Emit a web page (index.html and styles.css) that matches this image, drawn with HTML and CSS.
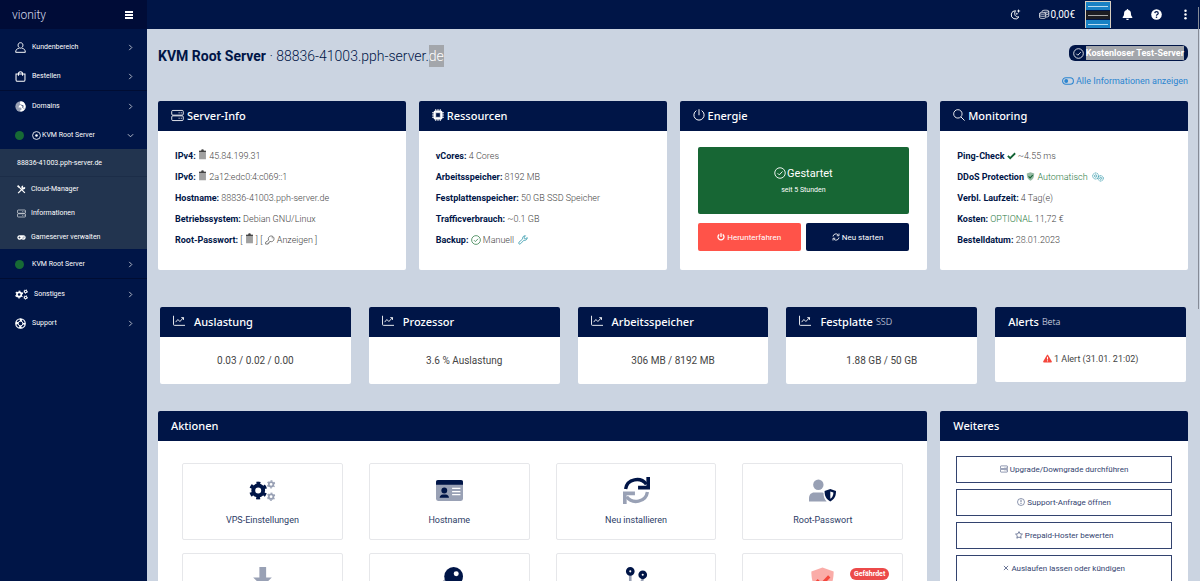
FILE: index.html
```html
<!DOCTYPE html>
<html lang="de">
<head>
  <meta charset="UTF-8" />
  <meta name="viewport" content="width=device-width, initial-scale=1" />
  <title>KVM Root Server - vionity</title>
  <link rel="stylesheet" href="styles.css">
</head>
<body>

<!-- icon sprite -->
<svg class="sprite" aria-hidden="true">
  <symbol id="user" viewBox="0 0 16 16"><g fill="none" stroke="currentColor" stroke-width="1.4"><path d="M8 1c2.300 0 3.500 1.600 3.500 3.700S10 9 8 9 4.500 6.800 4.500 4.700 5.700 1 8 1z"/><path d="M5.500 9.300C2.500 9.800 1 11.500 1 15h14c0-3.500-1.500-5.200-4.500-5.700"/></g></symbol>
  <symbol id="bag" viewBox="0 0 16 16"><path d="M1.500 4.500h13v8.500c0 1.200-.8 2-2 2h-9c-1.200 0-2-.8-2-2zM5 7V4c0-4 6-4 6 0v3" fill="none" stroke="currentColor" stroke-width="1.500"/></symbol>
  <symbol id="globe" viewBox="0 0 16 16"><circle cx="8" cy="8" r="7.500" fill="currentColor" opacity=".6"/><path d="M8 .5a7.500 7.500 0 0 1 5 13c-2 2-5 2-6 1l3-3-2-2H5l1-3 3-1-2-2z" fill="currentColor"/><path d="M9 6l3 1-1 2 2 2" stroke="#001547" fill="none"/></symbol>
  <symbol id="dotcircle" viewBox="0 0 16 16"><circle cx="8" cy="8" r="7" fill="none" stroke="currentColor" stroke-width="1.500"/><circle cx="8" cy="8" r="2.300" fill="currentColor"/></symbol>
  <symbol id="tools" viewBox="0 0 16 16"><path d="M2 2l12 12" stroke="currentColor" stroke-width="2.200"/><path d="M2 14.500L10 6.500" stroke="currentColor" stroke-width="2.200"/><path d="M14.500 3.500A3.500 3.500 0 1 1 11 1l-.5 3.500z" fill="currentColor"/><path d="M0 2l2-2 3 3-2 2z" fill="currentColor"/></symbol>
  <symbol id="server" viewBox="0 0 18 16"><g fill="none" stroke="currentColor" stroke-width="1.200"><rect x="1" y="1" width="16" height="6.500" rx="1.500"/><rect x="1" y="8.500" width="16" height="6.500" rx="1.500"/><path d="M10.500 4.300h1.500m1.500 0h1.500M10.500 11.800h1.500m1.500 0h1.500"/></g></symbol>
  <symbol id="gamepad" viewBox="0 0 18 16"><path d="M5 3.500h8a4.500 4.500 0 1 1-3 8H8a4.500 4.500 0 1 1-3-8z" fill="currentColor"/><path d="M5 6v4M3 8h4" stroke="#22344f" stroke-width="1.400"/><circle cx="12" cy="9" r="1" fill="#22344f"/><circle cx="14" cy="7" r="1" fill="#22344f"/></symbol>
  <symbol id="gear" viewBox="0 0 16 16"><circle cx="8" cy="8" r="4.300" fill="none" stroke="currentColor" stroke-width="3.400"/><circle cx="8" cy="8" r="6.600" fill="none" stroke="currentColor" stroke-width="2.400" stroke-dasharray="3.300 3.611" stroke-dashoffset="1.650" transform="rotate(30 8 8)"/></symbol>
  <symbol id="gears" viewBox="0 0 22 18"><use href="#gear" x="0" y="2" width="14" height="14"/><use href="#gear" x="14" y="0" width="8" height="8"/><use href="#gear" x="14" y="10" width="8" height="8"/></symbol>
  <symbol id="gears-duo" viewBox="0 0 22 18"><use href="#gear" x="0" y="1.500" width="15" height="15"/><g opacity=".4"><use href="#gear" x="14.500" y="0.500" width="7" height="7"/><use href="#gear" x="14.500" y="10.500" width="7" height="7"/></g></symbol>
  <symbol id="gears-thin" viewBox="0 0 18 14"><g fill="none" stroke="currentColor"><circle cx="5.500" cy="5.500" r="4.500" stroke-dasharray="2 .8" stroke-width="1.200"/><circle cx="5.500" cy="5.500" r="1.800"/><circle cx="13" cy="9" r="4" stroke-dasharray="2 .8" stroke-width="1.200"/><circle cx="13" cy="9" r="1.500"/></g></symbol>
  <symbol id="ring" viewBox="0 0 16 16"><g fill="none" stroke="currentColor"><circle cx="8" cy="8" r="7" stroke-width="1.500"/><circle cx="8" cy="8" r="3.400" stroke-width="1.300"/><circle cx="8" cy="8" r="5" stroke-width="3.600" stroke-dasharray="3.500 4.354" stroke-dashoffset="1.750"/></g></symbol>
  <symbol id="chev" viewBox="0 0 8 8"><path d="M2.500 1l3 3-3 3" fill="none" stroke="currentColor" stroke-width="1"/></symbol>
  <symbol id="chevdown" viewBox="0 0 8 8"><path d="M1 2.500l3 3 3-3" fill="none" stroke="currentColor" stroke-width="1"/></symbol>
  <symbol id="moon" viewBox="0 0 16 16"><path d="M8 2.500a6 6 0 1 0 5 9c-5 1-8-4-5-9z" fill="none" stroke="currentColor" stroke-width="1.400"/><path d="M12.500 0l.8 2.200 2.200.8-2.200.8-.8 2.200-.8-2.200L9.500 3l2.200-.8zM10 5l.6 1.400L12 7l-1.400.6L10 9l-.6-1.400L8 7l1.400-.6z" fill="currentColor"/></symbol>
  <symbol id="coins" viewBox="0 0 18 16"><g fill="none" stroke="currentColor" stroke-width="1.300"><path d="M1 6v7c0 2 10 2 10 0V6c0 2-10 2-10 0zM1 6c0-2 10-2 10 0M1 9.500c0 2 10 2 10 0M5 4V2.500c0-2 11-2 11 0v8c0 1-2 1.500-4 1.700M16 2.500c0 2-5 2-7 1.700M12 8c2 0 4-.6 4-1.700"/></g></symbol>
  <symbol id="bell" viewBox="0 0 16 16"><path d="M8 0c.8 0 1.200.6 1.200 1.300C12 2 13 4 13 6.500c0 3 1 4 2 5 .5.8 0 1.700-.8 1.700H1.800c-.8 0-1.300-.9-.8-1.700 1-1 2-2 2-5C3 4 4 2 6.800 1.300 6.800.6 7.200 0 8 0zM6 14h4c0 2.600-4 2.600-4 0z" fill="currentColor"/></symbol>
  <symbol id="help" viewBox="0 0 16 16"><circle cx="8" cy="8" r="7.700" fill="currentColor"/><path d="M5.500 6c.2-3 5-3 5 .1C10.500 8 8 8 8 9.700" fill="none" stroke="#001547" stroke-width="1.800"/><circle cx="8" cy="12" r="1.200" fill="#001547"/></symbol>
  <symbol id="dots" viewBox="0 0 4 16"><g fill="currentColor"><circle cx="2" cy="2.500" r="1.800"/><circle cx="2" cy="8" r="1.800"/><circle cx="2" cy="13.500" r="1.800"/></g></symbol>
  <symbol id="check" viewBox="0 0 16 16"><circle cx="8" cy="8" r="7" fill="none" stroke="currentColor" stroke-width="1.200"/><path d="M4.800 8.300l2.200 2.200 4.300-4.500" fill="none" stroke="currentColor" stroke-width="1.200"/></symbol>
  <symbol id="toggle" viewBox="0 0 20 14"><rect x="1" y="1.500" width="18" height="11" rx="5.500" fill="none" stroke="currentColor" stroke-width="1.800"/><circle cx="7" cy="7" r="3.200" fill="currentColor"/></symbol>
  <symbol id="clip" viewBox="0 0 12 16"><path d="M1 2.500h10V15H1z" fill="#a0a0a0"/><path d="M1 2.500h10v2H1zM4 2.500a2 2 0 0 1 4 0z" fill="#444"/></symbol>
  <symbol id="key" viewBox="0 0 16 16"><path d="M5.800 8.200A4.600 4.600 0 1 1 8 10.300L6.500 11.500v1.500H5v1.500H1v-3z" fill="none" stroke="currentColor" stroke-width="1.100"/><circle cx="11.500" cy="4.500" r=".8" fill="currentColor"/></symbol>
  <symbol id="chip" viewBox="0 0 16 16"><g fill="none" stroke="currentColor"><path d="M5 0v16M8 0v16M11 0v16M0 5h16M0 8h16M0 11h16" stroke-width="1.200"/><rect x="3" y="3" width="10" height="10" rx="1.500" stroke-width="2"/></g><rect x="5" y="5" width="6" height="6" fill="#001547" stroke="currentColor" stroke-width="1"/></symbol>
  <symbol id="wrench" viewBox="0 0 16 16"><path d="M14.800 4.200A4 4 0 0 1 9.500 8.300L4 14a1.700 1.700 0 0 1-2.500-2.400L7.500 6.200A4 4 0 0 1 12 1.200L9.800 3.400l.4 2 2 .5z" fill="none" stroke="currentColor" stroke-width="1.200"/></symbol>
  <symbol id="power" viewBox="0 0 16 16"><path d="M4.500 2.200a6.800 6.800 0 1 0 7 0M8 .3v8" fill="none" stroke="currentColor" stroke-width="1.300"/></symbol>
  <symbol id="powerbold" viewBox="0 0 16 16"><path d="M4.500 3a6 6 0 1 0 7 0M8 .5v7.500" fill="none" stroke="currentColor" stroke-width="2.600"/></symbol>
  <symbol id="sync" viewBox="0 0 16 16"><path d="M2 7a6 6 0 0 1 10.500-3.200M14 9A6 6 0 0 1 3.500 12.200M14 1v4.500H9.500M2 15v-4.500h4.500" fill="none" stroke="currentColor" stroke-width="1.700"/></symbol>
  <symbol id="search" viewBox="0 0 16 16"><circle cx="6.500" cy="6.500" r="5.600" fill="none" stroke="currentColor" stroke-width="1.200"/><path d="M10.600 10.600l4.800 4.800" stroke="currentColor" stroke-width="1.300"/></symbol>
  <symbol id="tick" viewBox="0 0 16 16"><path d="M1.500 8.500l4.200 4.200L14.500 4" fill="none" stroke="currentColor" stroke-width="3.200"/></symbol>
  <symbol id="shield" viewBox="0 0 16 16"><path d="M8 .3l6.600 2.400c0 6-1.600 10.500-6.600 13C3 13.200 1.400 8.700 1.400 2.700z" fill="currentColor" opacity=".45"/><path d="M4.500 7.800L7.300 10.500 12 5.500" fill="none" stroke="currentColor" stroke-width="1.900"/></symbol>
  <symbol id="chart" viewBox="0 0 16 14"><path d="M.7 0v11.500c0 1 .3 1.300 1.300 1.300h14M3.500 8.500L6.500 5l2.700 2.700L14 2.500M11 2.500h3v3" fill="none" stroke="currentColor" stroke-width="1.200"/></symbol>
  <symbol id="warn" viewBox="0 0 16 14"><path d="M8 .3c.5 0 .8.300 1 .6l6.700 11.500c.4.700 0 1.500-.9 1.500H1.200c-.9 0-1.300-.8-.9-1.500L7 .9c.2-.3.500-.6 1-.6z" fill="currentColor"/><path d="M8 4v4.800M8 10.300v1.800" stroke="#fff" stroke-width="1.700"/></symbol>
  <symbol id="idcard" viewBox="0 0 26 20"><rect width="26" height="20" rx="2" fill="currentColor" opacity=".4"/><path d="M0 4.500V2c0-1.200.8-2 2-2h22c1.200 0 2 .8 2 2v2.500z" fill="currentColor"/><circle cx="8" cy="10" r="2.800" fill="currentColor"/><path d="M3.500 17c0-2 1.500-3.200 3-3.200h3c1.500 0 3 1.200 3 3.200z" fill="currentColor"/><path d="M15.500 8h8M15.500 11h8M15.500 14h8" stroke="#fff" stroke-width="1.200"/></symbol>
  <symbol id="reload" viewBox="0 0 26 26"><path d="M2.500 11.500C4 1.500 17 -.5 22.500 7" fill="none" stroke="currentColor" stroke-width="3.200"/><path d="M22.500 0h3.500v12H14.500V8.500h8z" fill="currentColor"/><g opacity=".4"><path d="M23.500 14.500C22 24.500 9 26.500 3.500 19" fill="none" stroke="currentColor" stroke-width="3.200"/><path d="M3.500 26H0V14h11.500v3.500h-8z" fill="currentColor"/></g></symbol>
  <symbol id="usershield" viewBox="0 0 26 21"><g fill="currentColor"><g opacity=".4"><circle cx="9" cy="5" r="5"/><path d="M0 21v-2.500c0-4 2-6 5-6h8l1 .5c0 4 1 6 3 8z"/></g><path d="M20.500 9l5.500 2c0 5-1.500 8-5.500 10-4-2-5.500-5-5.500-10z"/></g><path d="M20.500 11.500l3 1c0 3-1 4.700-3 6z" fill="#fff"/></symbol>
  <symbol id="download" viewBox="0 0 26 26"><path d="M10 0h6.500v10H22l-9 9-9-9h6z" fill="currentColor" opacity=".4"/><path d="M0 18h8l5 4 5-4h8v8H0z" fill="currentColor"/></symbol>
  <symbol id="keyduo" viewBox="0 0 26 26"><path d="M9 11L0 20v6h8v-4h3v-3l4-3z" fill="currentColor" opacity=".4"/><circle cx="17" cy="9" r="9" fill="currentColor"/><circle cx="19.500" cy="6.500" r="2.400" fill="#fff"/></symbol>
  <symbol id="branch" viewBox="0 0 22 26"><g fill="none" stroke="currentColor"><path d="M5 6v16M17 10c0 7-6 6-12 9" stroke-width="2.500" opacity=".4"/><circle cx="5" cy="4.200" r="2.600" stroke-width="3.200"/><circle cx="17" cy="7.500" r="2.600" stroke-width="3.200"/></g></symbol>
  <symbol id="info" viewBox="0 0 16 16"><circle cx="8" cy="8" r="7" fill="none" stroke="currentColor" stroke-width="1.100"/><path d="M8 3.500v5M8 10v2" stroke="currentColor" stroke-width="1.400"/></symbol>
  <symbol id="star" viewBox="0 0 16 16"><path d="M8 1.200l2.100 4.400 4.800.6-3.500 3.400.9 4.800L8 12.100l-4.300 2.300.9-4.800L1.100 6.200l4.800-.6z" fill="none" stroke="currentColor" stroke-width="1.300"/></symbol>
  <symbol id="cross" viewBox="0 0 10 10"><path d="M1.500 1.500l7 7M8.500 1.500l-7 7" stroke="currentColor" stroke-width="1.200"/></symbol>
</svg>

<aside class="sidebar">
  <div class="brand">
    <span class="logo">vionity</span>
    <button class="burger" type="button" aria-label="Menu"><i></i><i></i><i></i></button>
  </div>
  <nav class="nav">
    <a class="nav-item" href="#"><svg class="i11"><use href="#user"/></svg><span>Kundenbereich</span><svg class="chev"><use href="#chev"/></svg></a>
    <a class="nav-item" href="#"><svg class="i11"><use href="#bag"/></svg><span>Bestellen</span><svg class="chev"><use href="#chev"/></svg></a>
    <hr>
    <a class="nav-item" href="#"><svg class="i11"><use href="#globe"/></svg><span>Domains</span><svg class="chev"><use href="#chev"/></svg></a>
    <a class="nav-item" href="#"><i class="status"></i><span><svg class="i9"><use href="#dotcircle"/></svg>KVM Root Server</span><svg class="chev"><use href="#chevdown"/></svg></a>
    <div class="submenu">
      <a class="sub-title" href="#">88836-41003.pph-server.de</a>
      <a href="#"><svg class="i9"><use href="#tools"/></svg>Cloud-Manager</a>
      <a href="#"><svg class="i9"><use href="#server"/></svg>Informationen</a>
      <a href="#"><svg class="i9"><use href="#gamepad"/></svg>Gameserver verwalten</a>
    </div>
    <a class="nav-item" href="#"><i class="status"></i><span>KVM Root Server</span><svg class="chev"><use href="#chev"/></svg></a>
    <hr>
    <a class="nav-item" href="#"><svg class="wide"><use href="#gears"/></svg><span>Sonstiges</span><svg class="chev"><use href="#chev"/></svg></a>
    <a class="nav-item" href="#"><svg class="i11"><use href="#ring"/></svg><span>Support</span><svg class="chev"><use href="#chev"/></svg></a>
  </nav>
</aside>

<div class="page">
  <header class="topbar">
    <button type="button" aria-label="Dark Mode"><svg class="i11"><use href="#moon"/></svg></button>
    <a class="balance" href="#"><svg class="i11"><use href="#coins"/></svg>0,00€</a>
    <button class="lang" type="button" aria-label="Sprache"><i></i><i></i><i></i></button>
    <button type="button" aria-label="Meldungen"><svg class="i11"><use href="#bell"/></svg></button>
    <button type="button" aria-label="Hilfe"><svg class="i11"><use href="#help"/></svg></button>
    <button type="button" aria-label="Mehr"><svg class="dots"><use href="#dots"/></svg></button>
  </header>

  <main class="content">
    <div class="page-head">
      <h1>KVM Root Server <small>· 88836-41003.pph-server.<mark>de</mark></small></h1>
      <div class="head-side">
        <span class="pill"><svg class="i11"><use href="#check"/></svg><mark>Kostenloser Test-Server</mark></span>
        <a class="all-info" href="#"><svg class="i12"><use href="#toggle"/></svg> Alle Informationen anzeigen</a>
      </div>
    </div>

    <div class="row four">
      <section class="card">
        <h2><svg class="i13"><use href="#server"/></svg>Server-Info</h2>
        <ul class="facts">
          <li><b>IPv4:</b> <svg class="clip"><use href="#clip"/></svg> 45.84.199.31</li>
          <li><b>IPv6:</b> <svg class="clip"><use href="#clip"/></svg> 2a12:edc0:4:c069::1</li>
          <li><b>Hostname:</b> 88836-41003.pph-server.de</li>
          <li><b>Betriebssystem:</b> Debian GNU/Linux</li>
          <li><b>Root-Passwort:</b> [ <svg class="clip"><use href="#clip"/></svg> ] [ <svg class="i10"><use href="#key"/></svg> Anzeigen ]</li>
        </ul>
      </section>
      <section class="card">
        <h2><svg class="i12"><use href="#chip"/></svg>Ressourcen</h2>
        <ul class="facts">
          <li><b>vCores:</b> 4 Cores</li>
          <li><b>Arbeitsspeicher:</b> 8192 MB</li>
          <li><b>Festplattenspeicher:</b> 50 GB SSD Speicher</li>
          <li><b>Trafficverbrauch:</b> ~0.1 GB</li>
          <li><b>Backup:</b> <svg class="i10 green"><use href="#check"/></svg> Manuell &nbsp;<svg class="i10 teal"><use href="#wrench"/></svg></li>
        </ul>
      </section>
      <section class="card">
        <h2><svg class="i12"><use href="#power"/></svg>Energie</h2>
        <div class="energy">
          <div class="state">
            <strong><svg class="i12"><use href="#check"/></svg>Gestartet</strong>
            <span>seit 5 Stunden</span>
          </div>
          <button class="stop" type="button"><svg class="i8"><use href="#powerbold"/></svg>Herunterfahren</button>
          <button class="restart" type="button"><svg class="i8"><use href="#sync"/></svg>Neu starten</button>
        </div>
      </section>
      <section class="card">
        <h2><svg class="i12"><use href="#search"/></svg>Monitoring</h2>
        <ul class="facts">
          <li><b>Ping-Check</b> <svg class="i9 darkgreen"><use href="#tick"/></svg> ~4.55 ms</li>
          <li><b>DDoS Protection</b> <svg class="i9 darkgreen"><use href="#shield"/></svg> <span class="green">Automatisch</span> &nbsp;<svg class="i12 teal"><use href="#gears-thin"/></svg></li>
          <li><b>Verbl. Laufzeit:</b> 4 Tag(e)</li>
          <li><b>Kosten:</b> <span class="green">OPTIONAL</span> 11,72 €</li>
          <li><b>Bestelldatum:</b> 28.01.2023</li>
        </ul>
      </section>
    </div>

    <div class="row five">
      <section class="card">
        <h2 class="spaced"><svg class="i12"><use href="#chart"/></svg>Auslastung</h2>
        <p>0.03 / 0.02 / 0.00</p>
      </section>
      <section class="card">
        <h2 class="spaced"><svg class="i12"><use href="#chart"/></svg>Prozessor</h2>
        <p>3.6 % Auslastung</p>
      </section>
      <section class="card">
        <h2 class="spaced"><svg class="i12"><use href="#chart"/></svg>Arbeitsspeicher</h2>
        <p>306 MB / 8192 MB</p>
      </section>
      <section class="card">
        <h2 class="spaced"><svg class="i12"><use href="#chart"/></svg>Festplatte <small>SSD</small></h2>
        <p>1.88 GB / 50 GB</p>
      </section>
      <section class="card">
        <h2>Alerts <small>Beta</small></h2>
        <p class="alert"><svg class="i9"><use href="#warn"/></svg> 1 Alert (31.01. 21:02)</p>
      </section>
    </div>

    <div class="row four">
      <section class="card actions">
        <h2>Aktionen</h2>
        <div class="tiles">
          <a class="tile" href="#"><svg><use href="#gears-duo"/></svg>VPS-Einstellungen</a>
          <a class="tile" href="#"><svg><use href="#idcard"/></svg>Hostname</a>
          <a class="tile" href="#"><svg><use href="#reload"/></svg>Neu installieren</a>
          <a class="tile" href="#"><svg><use href="#usershield"/></svg>Root-Passwort</a>
          <a class="tile" href="#" aria-label="Backups"><svg><use href="#download"/></svg></a>
          <a class="tile" href="#" aria-label="SSH-Keys"><svg><use href="#keyduo"/></svg></a>
          <a class="tile" href="#" aria-label="Netzwerk"><svg><use href="#branch"/></svg></a>
          <a class="tile danger" href="#" aria-label="Sicherheit"><svg><use href="#shield"/></svg><span class="tag">Gefährdet</span></a>
        </div>
      </section>
      <section class="card">
        <h2>Weiteres</h2>
        <div class="more">
          <button type="button"><svg class="i8"><use href="#server"/></svg>Upgrade/Downgrade durchführen</button>
          <button type="button"><svg class="i8"><use href="#info"/></svg>Support-Anfrage öffnen</button>
          <button type="button"><svg class="i8"><use href="#star"/></svg>Prepaid-Hoster bewerten</button>
          <button type="button"><svg class="i6"><use href="#cross"/></svg>Auslaufen lassen oder kündigen</button>
        </div>
      </section>
    </div>
  </main>
</div>
<div class="scroll-thumb"></div>

</body>
</html>
```

FILE: styles.css
```css
* { box-sizing: border-box; }
body {
  margin: 0; height: 100vh; overflow: hidden;
  display: grid; grid-template-columns: 147px 1fr;
  font-family: Roboto, "Liberation Sans", sans-serif; font-size: 9px;
  color: #444; background: #cbd4e1;
}
a { color: inherit; text-decoration: none; }
button { font: inherit; color: inherit; background: none; border: 0; padding: 0; cursor: pointer; }
h1, h2, p, ul { margin: 0; padding: 0; font-weight: normal; }
mark { background: #a3a6ab; color: #fff; }
svg { display: inline-block; vertical-align: middle; flex: none; }
.sprite { position: absolute; width: 0; height: 0; }
.i6 { width: 6px; height: 6px; }
.i8 { width: 8px; height: 8px; }
.i9 { width: 9px; height: 9px; }
.i10 { width: 10px; height: 10px; }
.i11 { width: 11px; height: 11px; }
.i12 { width: 12px; height: 12px; }
.i13 { width: 13px; height: 13px; }
.green { color: #2b7a43; }
.darkgreen { color: #136334; }
.teal { color: #2492a5; }

/* sidebar */
.sidebar { background: #001547; color: #fff; }
.brand {
  display: flex; align-items: center; justify-content: space-between;
  height: 29px; padding: 0 14px 0 12px; background: #000c37;
}
.logo { font-size: 12px; font-weight: 300; color: #d5daea; }
.burger { display: grid; gap: 1px; width: 8px; }
.burger i { height: 2px; background: #fff; }
.nav { padding-top: 3px; font-size: 7px; }
.nav hr { height: 1px; margin: 0; border: 0; background: #000d33; }
.nav-item { display: flex; align-items: center; gap: 6px; height: 29px; padding: 1px 13px 0 15px; }
.nav-item span { display: flex; align-items: center; gap: 1px; }
.nav-item .wide { width: 13px; height: 11px; }
.chev { width: 7px; height: 7px; margin-left: auto; opacity: .8; }
.status { width: 9px; height: 9px; margin-right: 2px; border-radius: 50%; background: #176a35; }
.submenu { background: #22344f; }
.submenu a { display: flex; align-items: center; gap: 5px; height: 24px; padding-left: 17px; }
.submenu .sub-title { height: 28px; padding-top: 1px; border-bottom: 1px solid #1c2d48; }

/* top bar */
.page { min-width: 0; height: 100vh; overflow-y: auto; scrollbar-width: none; }
.topbar {
  display: flex; align-items: center; justify-content: flex-end;
  height: 29px; padding-right: 13px; background: #001547; color: #fff;
}
.topbar button, .topbar a { display: flex; align-items: center; margin-left: 18px; }
.topbar .balance { gap: 1px; margin-right: -8px; font-size: 10px; }
.topbar .lang {
  display: grid; gap: 1px; width: 26px; height: 27px; margin-right: -7px;
  border: 1px solid #d8cfc0;
}
.lang i { height: 8px; background: linear-gradient(#b9dcf2, #b9dcf2) center / 20px 1px no-repeat, #1881c4; }
.lang i:nth-child(2) { background: linear-gradient(#aaa, #aaa) center / 20px 1px no-repeat, #1d1d22; }
.dots { width: 3px; height: 11px; margin-left: 4px; }

/* content */
.content { padding: 16px 12px 0 11px; }
.page-head { display: flex; justify-content: space-between; }
h1 { font-size: 14px; font-weight: 700; color: #001547; line-height: 22px; }
h1 small { font-size: 14px; font-weight: 300; }
h1 mark { display: inline-block; }
.head-side { display: flex; flex-direction: column; align-items: flex-end; }
.pill {
  display: flex; align-items: center; gap: 2px; height: 16px; padding: 0 4px;
  border-radius: 6px; background: #001547; color: #fff; font-weight: 700; line-height: 14px;
}
.all-info { margin: 14px 0 13px; font-size: 9px; line-height: 13px; color: #2b85d0; }
.all-info svg { margin-top: -1px; }

.row { display: grid; }
.four { grid-template-columns: repeat(4, 1fr); gap: 13px; }
.five { grid-template-columns: repeat(5, 1fr); gap: 18px; margin: 37px 2px 27px; align-items: start; }
.card { background: #fff; border-radius: 2px; overflow: hidden; }
.card h2 {
  display: flex; align-items: center; gap: 3px; height: 30px; padding: 0 13px 2px;
  background: #001547; color: #fff;
  font-family: "Noto Sans", "Open Sans", sans-serif; font-size: 11px; font-weight: 500;
}
.card h2 small { font-size: 9px; font-weight: 300; color: #e0e4f0; }
.card h2.spaced svg { margin-right: 6px; }
.facts { list-style: none; padding: 15px 17px 19px; }
.facts li { line-height: 21px; font-weight: 300; white-space: nowrap; }
.facts b { font-weight: 700; color: #001547; }
.facts svg { margin-top: -2px; }
.facts .clip { width: 9px; height: 11px; margin-top: -4px; }

.energy { display: grid; grid-template-columns: 1fr 1fr; gap: 9px 5px; padding: 16px 18px 19px; color: #fff; }
.state {
  grid-column: span 2; display: flex; flex-direction: column; align-items: center;
  height: 67px; padding-top: 18px; border-radius: 2px; background: #176634;
}
.state strong { font-size: 11px; font-weight: 400; line-height: 17px; }
.state svg { margin: -2px 1px 0 0; }
.state span { font-size: 7px; line-height: 16px; }
.energy button { height: 28px; border-radius: 2px; font-size: 8px; }
.energy .stop { background: #ff5349; }
.energy .restart { background: #001547; }
.energy button svg, .more svg { margin: -1px 2px 0 0; }

.five p { line-height: 47px; font-size: 10px; text-align: center; }
.five .alert { line-height: 45px; font-size: 9px; }
.alert svg { color: #f4473d; margin-top: -2px; }

.actions { grid-column: span 3; }
.tiles { display: grid; grid-template-columns: repeat(4, 1fr); gap: 13px 26px; padding: 22px 24px; }
.tile {
  position: relative; display: flex; flex-direction: column; align-items: center; gap: 10px;
  height: 77px; padding-top: 13px; border: 1px solid #e6e7ea; border-radius: 2px;
  color: #2c3c66; line-height: 12px;
}
.tile svg { width: 27px; height: 27px; color: #001547; }
.tile.danger svg { color: #f4473d; }
.tag {
  position: absolute; top: 14px; right: 13px; padding: 0 4px; border-radius: 6px;
  background: #ec4a4a; color: #fff; font-size: 7px; font-weight: 700;
}
.more { display: grid; gap: 6px; padding: 15px 16px; }
.more button { height: 27px; border: 1px solid #33436f; color: #33436f; font-size: 8px; }

/* scroll indicator over the right edge */
.scroll-thumb { position: fixed; top: 7px; right: 1px; width: 1px; height: 52vh; background: #858b97; }
```
